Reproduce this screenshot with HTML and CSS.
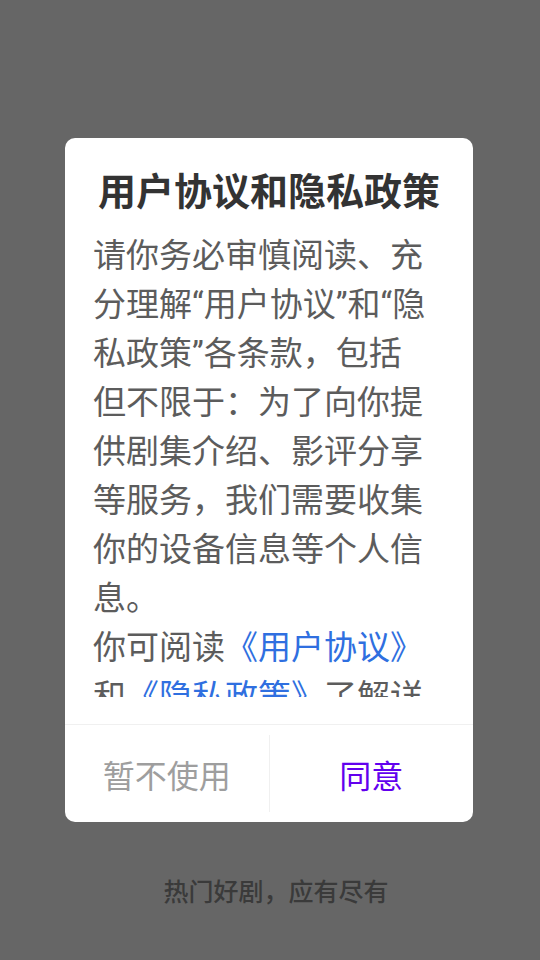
FILE: index.html
```html
<!DOCTYPE html>
<html lang="zh-CN">
<head>
<meta charset="utf-8">
<title>用户协议和隐私政策</title>
<link rel="stylesheet" href="styles.css">
</head>
<body>
<div class="screen">
  <div class="dialog">
    <h1 class="dialog-title">用户协议和隐私政策</h1>
    <div class="dialog-body">
      <p class="dialog-text">请你务必审慎阅读、充<br>分理解“用户协议”和“隐<br>私政策”各条款，包括<br>但不限于：为了向你提<br>供剧集介绍、影评分享<br>等服务，我们需要收集<br>你的设备信息等个人信<br>息。<br>你可阅读<span class="link">《用户协议》</span><br>和<span class="link">《隐私政策》</span>了解详细信息。如你同意，请点击“同意”开始接受我们的服务。</p>
    </div>
    <div class="dialog-actions">
      <button class="btn btn-cancel">暂不使用</button>
      <span class="sep"></span>
      <button class="btn btn-ok">同意</button>
    </div>
  </div>
  <p class="tagline">热门好剧，应有尽有</p>
</div>
</body>
</html>
```
FILE: styles.css
```css
html, body {
  margin: 0;
  padding: 0;
}
body {
  background: #666666;
  font-family: Roboto, "Noto Sans CJK SC", sans-serif;
}
.screen {
  width: 540px;
  height: 960px;
  display: flex;
  flex-direction: column;
  overflow: hidden;
}
.dialog {
  margin: 138px 0 0 65px;
  width: 408px;
  height: 684px;
  box-sizing: border-box;
  background: #ffffff;
  border-radius: 10px;
  display: flex;
  flex-direction: column;
  padding-top: 29px;
}
.dialog-title {
  margin: 0;
  font-size: 38px;
  line-height: 50px;
  font-weight: 700;
  color: #333333;
  text-align: center;
}
.dialog-body {
  margin: 14px 0 0 0;
  padding: 0 26px 0 28px;
  height: 466px;
  overflow: hidden;
}
.dialog-text {
  margin: 0;
  font-size: 33px;
  line-height: 49px;
  color: #5c5c5c;
}
.link {
  color: #2f6fe0;
}
.dialog-actions {
  margin-top: auto;
  border-top: 1px solid #f0f0f0;
  height: 97px;
  display: flex;
  align-items: stretch;
}
.btn {
  flex: 1;
  border: none;
  background: transparent;
  font-family: Roboto, "Noto Sans CJK SC", sans-serif;
  font-size: 32px;
  padding: 0;
}
.btn-cancel {
  color: #9e9e9e;
}
.btn-ok {
  color: #6200ee;
}
.sep {
  width: 1px;
  margin: 10px 0;
  background: #f0f0f0;
}
.tagline {
  margin: 56px 0 0 0;
  padding-left: 12px;
  text-align: center;
  font-size: 25px;
  line-height: 30px;
  font-weight: 500;
  color: #3a3a3a;
}
```
